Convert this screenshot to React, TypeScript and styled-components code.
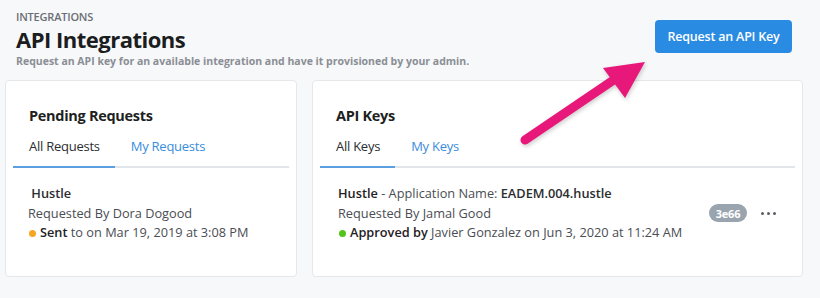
import styled, { createGlobalStyle } from 'styled-components';

const GlobalStyle = createGlobalStyle`
  body {
    margin: 0;
    background: #f7f8fa;
    font-family: 'Open Sans', 'Noto Sans', sans-serif;
    color: #222;
  }
`;

const Page = styled.div`
  position: relative;
  width: 820px;
  height: 298px;
  overflow: hidden;
`;

const Header = styled.header`
  display: flex;
  justify-content: space-between;
  align-items: flex-start;
  padding: 10px 28px 0 16px;
`;

const Eyebrow = styled.div`
  font-size: 11px;
  font-weight: 600;
  color: #6b6f75;
  letter-spacing: -0.2px;
  line-height: 14px;
`;

const Title = styled.h1`
  margin: 1px 0 0;
  font-size: 22px;
  font-weight: 700;
  color: #1b1d20;
  letter-spacing: -0.5px;
  line-height: 28px;
`;

const Subtitle = styled.p`
  margin: 1px 0 0;
  font-size: 10.5px;
  font-weight: 700;
  color: #8a8e94;
  line-height: 14px;
`;

const PrimaryButton = styled.button`
  margin-top: 10px;
  height: 33px;
  width: 137px;
  border: none;
  border-radius: 4px;
  background: #2a8be3;
  color: #fff;
  font-family: inherit;
  font-size: 12.5px;
  font-weight: 600;
  letter-spacing: -0.2px;
`;

const Cards = styled.div`
  display: grid;
  grid-template-columns: 292px 491px;
  gap: 15px;
  padding: 0 0 0 5px;
  margin-top: 12px;
`;

const Card = styled.section`
  height: 197px;
  box-sizing: border-box;
  background: #fff;
  border: 1px solid #e5e7ea;
  border-radius: 4px;
  padding: 25px 7px 0;
`;

const CardTitle = styled.h2`
  margin: 0 0 0 16px;
  font-size: 14.5px;
  font-weight: 700;
  color: #1d1f22;
  letter-spacing: -0.3px;
  line-height: 20px;
`;

const Tabs = styled.div`
  display: flex;
  margin-top: 11px;
  border-bottom: 2px solid #e2e5e9;
`;

const Tab = styled.div<{ $active?: boolean }>`
  padding: 0 15px 11px 16px;
  margin-bottom: -2px;
  font-size: 13px;
  letter-spacing: -0.25px;
  line-height: 18px;
  color: ${(p) => (p.$active ? '#2b2d30' : '#3a8ddb')};
  border-bottom: 2px solid ${(p) => (p.$active ? '#5b9fe0' : 'transparent')};
`;

const Item = styled.div<{ $indent: number }>`
  display: flex;
  align-items: center;
  padding: 16px 0 0 ${(p) => p.$indent}px;
  font-size: 12.75px;
  line-height: 19.5px;
  color: #4a4d52;
`;

const ItemText = styled.div`
  flex: 1;
`;

const Name = styled.div`
  color: #2b2d30;
  b {
    font-weight: 600;
  }
`;

const Muted = styled.span`
  color: #4a4d52;
`;

const Strong = styled.b`
  font-weight: 600;
  color: #1f2124;
`;

const StatusDot = styled.span<{ $color: string }>`
  display: inline-block;
  width: 7px;
  height: 7px;
  border-radius: 50%;
  background: ${(p) => p.$color};
  margin: 0 4px 1px 1px;
  vertical-align: middle;
`;

const Badge = styled.span`
  display: inline-flex;
  align-items: center;
  justify-content: center;
  width: 38px;
  height: 18px;
  border-radius: 9px;
  background: #9aa4af;
  color: #fff;
  font-size: 11px;
  font-weight: 700;
  letter-spacing: -0.2px;
`;

const MoreButton = styled.span`
  display: inline-flex;
  gap: 3px;
  margin: 0 19px 0 14px;
  span {
    width: 3px;
    height: 3px;
    border-radius: 50%;
    background: #5a5e64;
  }
`;

const Arrow = styled.svg`
  position: absolute;
  left: 510px;
  top: 50px;
  filter: drop-shadow(1px 2px 2px rgba(0, 0, 0, 0.2));
`;

export default function App() {
  return (
    <Page>
      <GlobalStyle />
      <Header>
        <div>
          <Eyebrow>INTEGRATIONS</Eyebrow>
          <Title>API Integrations</Title>
          <Subtitle>
            Request an API key for an available integration and have it provisioned by your admin.
          </Subtitle>
        </div>
        <PrimaryButton>Request an API Key</PrimaryButton>
      </Header>
      <Cards>
        <Card>
          <CardTitle>Pending Requests</CardTitle>
          <Tabs>
            <Tab $active>All Requests</Tab>
            <Tab>My Requests</Tab>
          </Tabs>
          <Item $indent={15}>
            <ItemText>
              <Name>
                &nbsp;<b>Hustle</b>
              </Name>
              <div>Requested By Dora Dogood</div>
              <div>
                <StatusDot $color="#f5a623" />
                <Strong>Sent</Strong> to on Mar 19, 2019 at 3:08 PM
              </div>
            </ItemText>
          </Item>
        </Card>
        <Card>
          <CardTitle>API Keys</CardTitle>
          <Tabs>
            <Tab $active>All Keys</Tab>
            <Tab>My Keys</Tab>
          </Tabs>
          <Item $indent={18}>
            <ItemText>
              <Name>
                <Strong>Hustle</Strong> <Muted>- Application Name:</Muted> <b>EADEM.004.hustle</b>
              </Name>
              <div>Requested By Jamal Good</div>
              <div>
                <StatusDot $color="#52c41a" />
                <Strong>Approved by</Strong> Javier Gonzalez on Jun 3, 2020 at 11:24 AM
              </div>
            </ItemText>
            <Badge>3e66</Badge>
            <MoreButton>
              <span />
              <span />
              <span />
            </MoreButton>
          </Item>
        </Card>
      </Cards>
      <Arrow width="150" height="110" viewBox="0 0 150 110">
        <line x1="15" y1="90" x2="108" y2="27" stroke="#e8177a" strokeWidth="9" strokeLinecap="round" />
        <polygon points="135,12 93,18 115,48" fill="#e8177a" />
      </Arrow>
    </Page>
  );
}
